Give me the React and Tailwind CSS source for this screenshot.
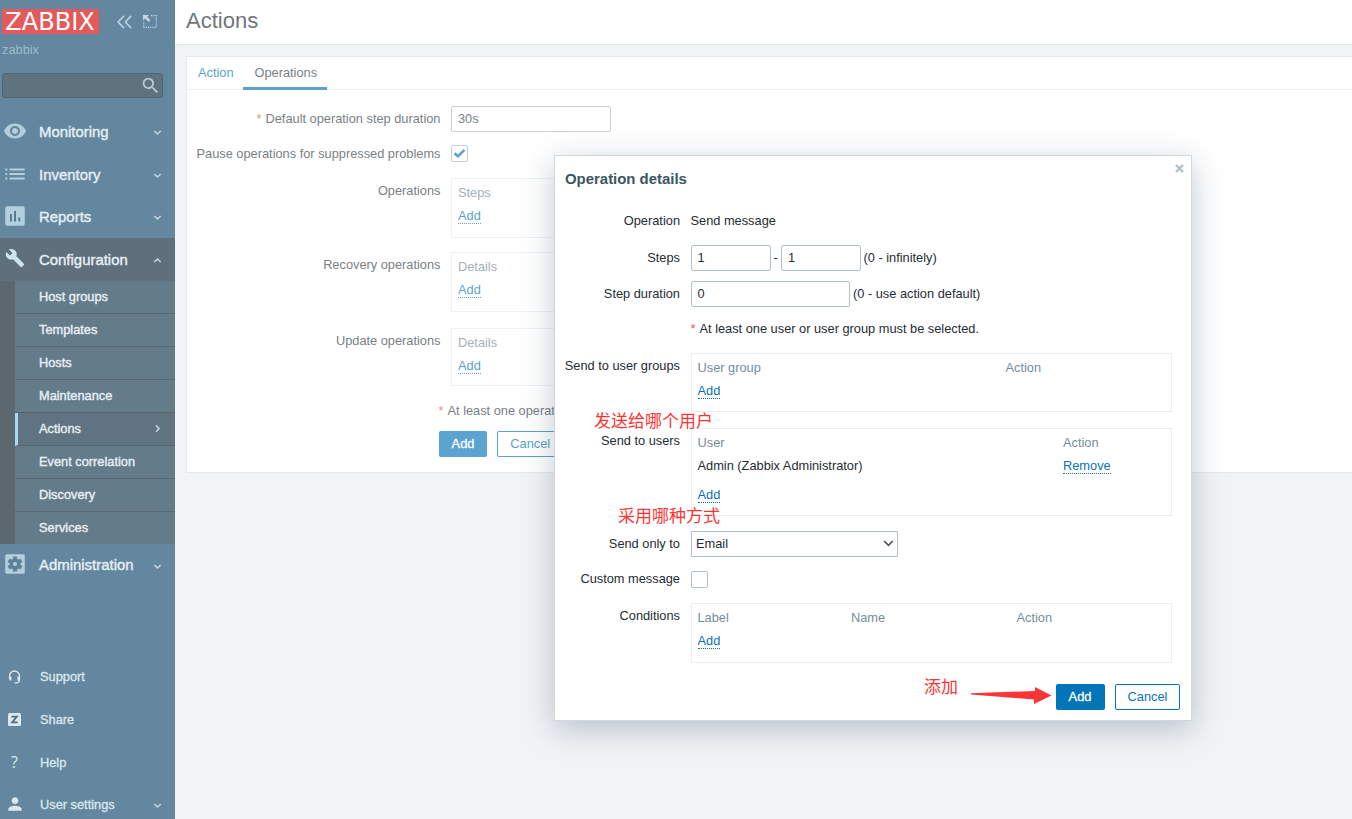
import React from "react";
import { MdRemoveRedEye, MdBuild, MdSearch, MdPerson } from "react-icons/md";

function Chevron({ dir = "down" }) {
  const d = { down: "M1.3 3 4.5 6 7.7 3", up: "M1.3 6 4.5 3 7.7 6", right: "M3 1.3 6 4.5 3 7.7" }[dir];
  return (
    <svg className="h-[9px] w-[9px] text-[#c3d6e1]" viewBox="0 0 9 9" fill="none" stroke="currentColor" strokeWidth="1.6">
      <path d={d} />
    </svg>
  );
}

function ListIcon() {
  return (
    <svg className="-mt-[1px] h-[12px] w-5 text-[#b3cfde]" viewBox="0 0 20 12" fill="currentColor">
      {[0.5, 5, 9.5].map((y) => (
        <g key={y}>
          <rect x="0.3" y={y} width="2" height="2" />
          <rect x="4.5" y={y} width="15.2" height="2" />
        </g>
      ))}
    </svg>
  );
}

function ReportIcon() {
  return (
    <svg className="-mt-[2px] h-5 w-5" viewBox="0 0 20 20">
      <rect x="0.2" y="0.2" width="19.6" height="19.6" rx="2" fill="#b3cfde" />
      <path d="M5 8h1.9v7.5H5zM9.1 5h1.9v10.5H9.1zM13.3 11.6h1.9v3.9h-1.9z" fill="#52798f" />
    </svg>
  );
}

function AdminIcon() {
  return (
    <svg className="-mt-[2px] h-5 w-5" viewBox="0 0 20 20">
      <rect x="0.2" y="0.2" width="19.6" height="19.6" rx="1.8" fill="#b3cfde" />
      <g fill="#5d8297">
        <circle cx="10" cy="10" r="5.5" />
        {[0, 60, 120].map((a) => (
          <rect key={a} x="7.9" y="2.5" width="4.2" height="15" rx="0.6" transform={`rotate(${a} 10 10)`} />
        ))}
      </g>
      <circle cx="10" cy="10" r="2" fill="#b3cfde" />
    </svg>
  );
}

function HeadsetIcon() {
  return (
    <svg className="h-[14px] w-[13px]" viewBox="0 0 13 14" fill="none" stroke="currentColor" strokeWidth="1.3">
      <path d="M1.5 8V6a5 5 0 0 1 10 0v3.5c0 2-1.5 3.4-3.3 3.4H6.5" />
      <path d="M1.2 6.6h2.3v3.8H2.2a1 1 0 0 1-1-1zM11.8 6.6H9.5v3.8h2.3z" fill="currentColor" stroke="none" />
    </svg>
  );
}

function MenuItem({ icon, label, dir, active }) {
  return (
    <div className={"flex h-[42.6px] items-center pr-[13px] " + (active ? "bg-[#5f707c]" : "")}>
      <div className="flex w-[39px] items-center pl-[5px]">{icon}</div>
      <div className="flex-1 pt-[1px] text-[14.93px] text-[#e6eef3] [-webkit-text-stroke:0.4px_#e6eef3]">{label}</div>
      <div className="pt-[2px]"><Chevron dir={dir} /></div>
    </div>
  );
}

function BottomItem({ icon, label, more }) {
  return (
    <div className="flex h-[42.6px] items-center pr-[13px] text-[#dce7ee]">
      <div className="flex w-[40px] items-center pl-[8px]">{icon}</div>
      <div className="flex-1 text-[12.8px] [-webkit-text-stroke:0.3px_#dce7ee]">{label}</div>
      {more && <div className="pt-[2px]"><Chevron /></div>}
    </div>
  );
}

const SUBMENU = ["Host groups", "Templates", "Hosts", "Maintenance", "Actions", "Event correlation", "Discovery", "Services"];

function Sidebar() {
  return (
    <aside className="flex h-full w-[175px] shrink-0 flex-col bg-[#62879e]">
      <div className="flex h-[43px] items-center pl-[2px]">
        <div className="flex h-[25px] w-[97px] items-center justify-center bg-[#e45959] pr-[1px] pt-[2px] text-[24px] leading-[25px] text-white">
          <span className="font-['DejaVu_Sans',sans-serif]">ZABBIX</span>
        </div>
        <svg className="ml-[18px] h-[14px] w-[15px]" viewBox="0 0 15 14" fill="none" stroke="#b7d0de" strokeWidth="1.7">
          <path d="M7 .8 1.2 7 7 13.2M14.2.8 8.4 7l5.8 6.2" />
        </svg>
        <svg className="ml-[11px] h-[13px] w-[14px]" viewBox="0 0 14 13">
          <path d="M8 .7h5.3v11.6H.7V7.5" fill="none" stroke="#c3d8e4" strokeWidth="1.2" strokeDasharray="1.2 1" />
          <path d="M0 0h6L4.2 1.9 7.4 5.1 5.6 6.9 2.2 3.6 0 5.8z" fill="#c3d8e4" />
        </svg>
      </div>
      <div className="h-[29.5px] pl-[2px] text-[12.8px] leading-[14px] text-[#9ebaca]">zabbix</div>
      <div className="ml-[2px] flex h-[25.5px] w-[161px] items-center justify-end rounded-[3px] border border-[#53656f] bg-[#5f727e] pr-[1px]">
        <MdSearch className="h-[21px] w-[21px] text-[#b5cedc]" />
      </div>
      <div className="h-[12.5px]" />
      <MenuItem icon={<MdRemoveRedEye className="-ml-[2px] -mt-[2px] h-6 w-6 text-[#b3cfde]" />} label="Monitoring" />
      <MenuItem icon={<ListIcon />} label="Inventory" />
      <MenuItem icon={<ReportIcon />} label="Reports" />
      <MenuItem icon={<MdBuild className="-mt-[3px] h-5 w-5 text-[#cfe4f2]" />} label="Configuration" dir="up" active />
      <div className="flex h-[263px] bg-[#5d686e]">
        <div className="w-[15px]" />
        <div className="flex flex-1 flex-col">
          {SUBMENU.map((s) => (
            <div
              key={s}
              className={
                "flex flex-1 items-center border-b pr-[13px] last:border-b-0 " +
                (s === "Actions"
                  ? "border-b-[#566771] border-l-[3px] border-l-[#a9d8f7] bg-[#5f7380] pl-[21px]"
                  : "border-b-[#566771] bg-[#647b8a] pl-[24px]")
              }
            >
              <span className="flex-1 text-[12.8px] text-[#e6eef3] [-webkit-text-stroke:0.4px_#e6eef3]">{s}</span>
              {s === "Actions" && <Chevron dir="right" />}
            </div>
          ))}
        </div>
      </div>
      <MenuItem icon={<AdminIcon />} label="Administration" />
      <div className="flex-1" />
      <BottomItem icon={<HeadsetIcon />} label="Support" />
      <BottomItem
        icon={
          <svg className="-mt-[1px] h-[13px] w-[13px]" viewBox="0 0 13 13">
            <rect width="13" height="13" rx="1.5" fill="#dce7ee" />
            <path d="M3.4 3.6H8.8L4.2 9.4h5.4" fill="none" stroke="#4b7188" strokeWidth="1.8" />
          </svg>
        }
        label="Share"
      />
      <BottomItem icon={<span className="w-[13px] text-center font-['Open_Sans',sans-serif] text-[16px] leading-[18px]">?</span>} label="Help" />
      <BottomItem icon={<MdPerson className="-ml-[3px] -mt-[2px] h-[20px] w-[20px]" />} label="User settings" more />
      <div className="-mt-[7px]" />
    </aside>
  );
}

function Faded({ children }) {
  return <span className="border-b border-dotted border-[#5aa2d0] leading-[15px] text-[#5aa2d0]">{children}</span>;
}

function Link({ children }) {
  return <span className="border-b border-dotted border-[#0a73b5] leading-[15px] text-[#0a73b5]">{children}</span>;
}

function OpRow({ label, head, className }) {
  return (
    <div className={"flex " + className}>
      <div className="w-[253.5px] pt-[4px] text-right leading-[17px]">{label}</div>
      <div className="ml-[10.5px] flex w-[480px] flex-col items-start border border-[#eff2f3] pl-[6px] pt-[5px]">
        <div className="h-[24px] leading-[18px] text-[#a5b0b7]">{head}</div>
        <Faded>{"Add"}</Faded>
      </div>
    </div>
  );
}

function Page() {
  return (
    <main className="flex min-w-0 flex-1 flex-col bg-[#f2f3f5] text-[12.8px] text-[#797f84]">
      <header className="flex h-[44.5px] shrink-0 items-center border-b border-[#dfe4e7] bg-white pb-[2px] pl-[11px] text-[22px] text-[#71767b]">
        Actions
      </header>
      <section className="ml-[11px] mt-[11px] flex h-[417px] flex-col border border-r-0 border-[#e6eaec] bg-white">
        <div className="flex h-[33px] shrink-0 border-b border-[#edf0f2] leading-[32px]">
          <div className="w-[56px] pl-[11px] text-[#5aa2d0]">Action</div>
          <div className="h-[33px] w-[84px] border-b-[3px] border-[#5aa2d0] pl-[11.5px]">Operations</div>
        </div>
        <div className="mt-[16px] flex h-[26px] items-center">
          <div className="w-[253.5px] text-right">
            <span className="mr-[4px] text-[#f08d8d]">*</span>Default operation step duration
          </div>
          <div className="ml-[10.5px] flex h-[26px] w-[160px] items-center rounded-[2px] border border-[#c5cfd5] pl-[6px]">30s</div>
        </div>
        <div className="mt-[13px] flex h-[18px] items-center">
          <div className="w-[253.5px] whitespace-nowrap text-right">Pause operations for suppressed problems</div>
          <div className="ml-[10.5px] flex h-[17px] w-[17px] items-center justify-center rounded-[2px] border border-[#c5cfd5]">
            <svg className="h-[11px] w-[13px]" viewBox="0 0 13 11" fill="none" stroke="#5aa2d0" strokeWidth="2.5">
              <path d="M1.5 5.2 5 8.3l6.4-6.5" />
            </svg>
          </div>
        </div>
        <OpRow className="mt-[15px] h-[60px]" label="Operations" head="Steps" />
        <OpRow className="mt-[14px] h-[60px]" label="Recovery operations" head="Details" />
        <OpRow className="mt-[16px] h-[58px]" label="Update operations" head="Details" />
        <div className="mt-[16px] h-[16px] whitespace-nowrap pl-[251.5px] leading-[17px]">
          <span className="mr-[4px] text-[#f08d8d]">*</span>At least one operation must exist.
        </div>
        <div className="mt-[13px] flex gap-[10px] pl-[252px]">
          <div className="flex h-[26px] w-[48px] items-center justify-center rounded-[2px] bg-[#5ba3d0] text-white [-webkit-text-stroke:0.3px_white]">Add</div>
          <div className="flex h-[26px] w-[66.5px] items-center justify-center rounded-[2px] border border-[#5aa2d0] text-[#5aa2d0]">Cancel</div>
        </div>
      </section>
    </main>
  );
}

function Field({ label, className, top, children }) {
  return (
    <div className={"flex " + (top ? "items-start " : "items-center ") + className}>
      <div className={"w-[125.5px] shrink-0 whitespace-nowrap text-right leading-[17px] " + (top ? "pt-[4px]" : "pb-[1px]")}>{label}</div>
      <div className="ml-[10.5px] flex h-full items-center">{children}</div>
    </div>
  );
}

const INPUT = "flex h-[26px] items-center rounded-[2px] border border-[#b3c0c8] pl-[6px]";
const TABLE = "flex h-full w-[481px] flex-col self-start border border-[#ebeef0] pl-[6px] pt-[5px]";

function Dialog() {
  return (
    <div className="absolute left-[553.5px] top-[155px] flex h-[566px] w-[638px] flex-col border border-[#cfd8dd] bg-white text-[12.8px] text-[#1f2c33] shadow-[0_8px_30px_rgba(0,45,70,0.25)]">
      <div className="flex h-[54px] shrink-0 items-start justify-between pl-[10.5px] pr-[7px] pt-[13px]">
        <h2 className="text-[14.93px] font-bold leading-[19px] text-[#3c5563]">Operation details</h2>
        <svg className="-mt-[5px] h-[9px] w-[9px]" viewBox="0 0 9 9" stroke="#b4c0c7" strokeWidth="2.4">
          <path d="M1 1l7 7M8 1 1 8" />
        </svg>
      </div>
      <Field label="Operation" className="h-[22px]">
        <span className="pb-[1px]">Send message</span>
      </Field>
      <Field label="Steps" className="mt-[13px] h-[26px]">
        <div className={INPUT + " w-[80px]"}>1</div>
        <span className="w-[10.5px] text-center">-</span>
        <div className={INPUT + " w-[80px]"}>1</div>
        <span className="ml-[2.5px]">(0 - infinitely)</span>
      </Field>
      <Field label="Step duration" className="mt-[10px] h-[26px]">
        <div className={INPUT + " w-[159.5px]"}>0</div>
        <span className="ml-[3px]">(0 - use action default)</span>
      </Field>
      <Field label="" className="mt-[13px] h-[18px]">
        <span className="mr-[4px] text-[#e45959]">*</span>At least one user or user group must be selected.
      </Field>
      <Field label="Send to user groups" top className="mt-[15px] h-[59px]">
        <div className={TABLE}>
          <div className="flex h-[24px] leading-[18px] text-[#768d99]">
            <span className="w-[308px]">User group</span>
            <span>Action</span>
          </div>
          <div className="leading-[15px]"><Link>Add</Link></div>
        </div>
      </Field>
      <Field label="Send to users" top className="mt-[16px] h-[88px]">
        <div className={TABLE}>
          <div className="flex h-[24px] leading-[18px] text-[#768d99]">
            <span className="w-[365.5px]">User</span>
            <span>Action</span>
          </div>
          <div className="flex h-[29px] leading-[15px]">
            <span className="w-[365.5px]">Admin (Zabbix Administrator)</span>
            <span><Link>Remove</Link></span>
          </div>
          <div className="leading-[15px]"><Link>Add</Link></div>
        </div>
      </Field>
      <Field label="Send only to" className="mt-[14.5px] h-[26px]">
        <div className="flex h-[26px] w-[207px] items-center justify-between border border-[#b3c0c8] pl-[4.5px] pr-[3px]">
          Email
          <svg className="h-[7px] w-[11px]" viewBox="0 0 11 7" fill="none" stroke="#4a5156" strokeWidth="1.6">
            <path d="M1.2 1 5.5 5.3 9.8 1" />
          </svg>
        </div>
      </Field>
      <Field label="Custom message" className="mt-[13.5px] h-[18px]">
        <div className="h-[17px] w-[17px] rounded-[2px] border border-[#b3c0c8]" />
      </Field>
      <Field label="Conditions" top className="mt-[15px] h-[60px]">
        <div className={TABLE}>
          <div className="flex h-[24px] leading-[18px] text-[#768d99]">
            <span className="w-[153.5px]">Label</span>
            <span className="w-[165.5px]">Name</span>
            <span>Action</span>
          </div>
          <div className="leading-[15px]"><Link>Add</Link></div>
        </div>
      </Field>
      <div className="mt-[21px] flex justify-end gap-[10.5px] pr-[10.5px]">
        <div className="flex h-[26px] w-[49px] items-center justify-center rounded-[2px] bg-[#0275b8] text-white [-webkit-text-stroke:0.3px_white]">Add</div>
        <div className="flex h-[26px] w-[65px] items-center justify-center rounded-[2px] border border-[#0275b8] text-[#0a73b5]">Cancel</div>
      </div>
    </div>
  );
}

function Note({ className, children }) {
  return (
    <div className={"absolute whitespace-nowrap font-['Noto_Sans_CJK_SC',sans-serif] text-[17px] leading-[20px] text-[#fb3535] " + className}>
      {children}
    </div>
  );
}

export default function App() {
  return (
    <div className="relative flex h-[819px] w-[1352px] overflow-hidden font-['Liberation_Sans',Arial,sans-serif]">
      <Sidebar />
      <Page />
      <Dialog />
      <Note className="left-[594px] top-[410px]">发送给哪个用户</Note>
      <Note className="left-[618px] top-[505px]">采用哪种方式</Note>
      <Note className="left-[924px] top-[676px]">添加</Note>
      <svg className="absolute left-[970px] top-[686px] h-[19px] w-[82px]" viewBox="0 0 82 19" fill="#fb3535">
        <path d="M1 7.2 65 5V1L81.5 9.5 64 18V13.5L1 8.6z" />
      </svg>
    </div>
  );
}
